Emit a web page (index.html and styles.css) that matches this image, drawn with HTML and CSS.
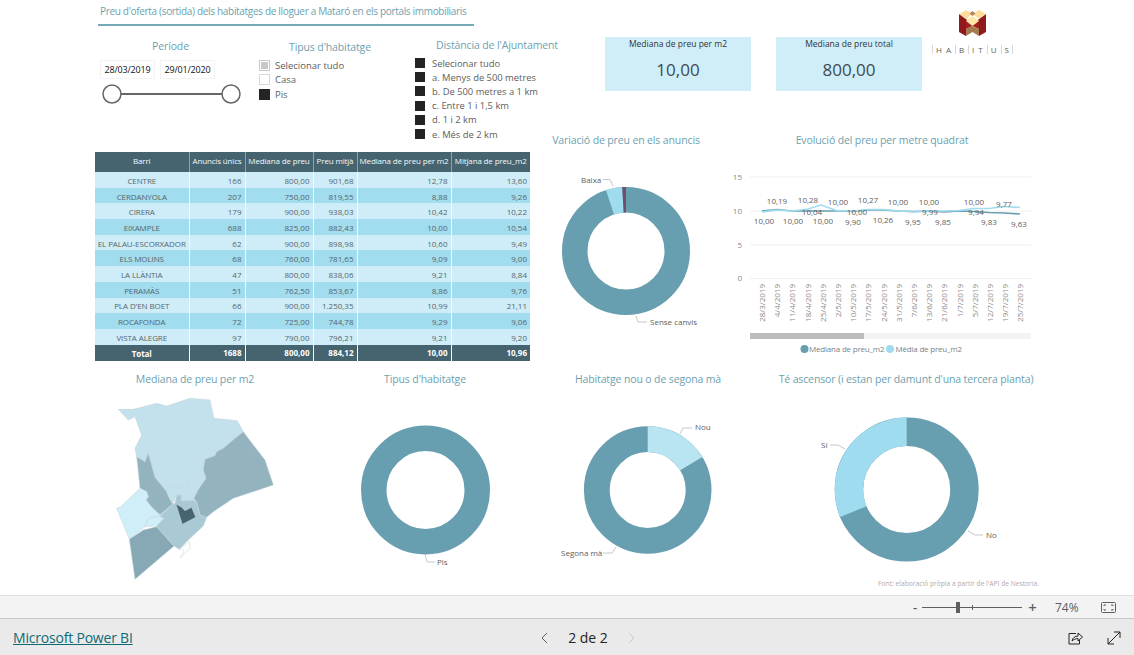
FILE: index.html
```
<!DOCTYPE html>
<html lang="ca">
<head>
<meta charset="utf-8">
<title>Microsoft Power BI</title>
<link rel="stylesheet" href="styles.css">
</head>
<body>
<div class="app">
  <main class="report">
    <div class="upper">
      <section class="left">
        <h1 class="report-title">Preu d'oferta (sortida) dels habitatges de lloguer a Mataró en els portals immobiliaris</h1>
        <div class="filters">
          <div class="period">
            <h2 class="vis-title">Període</h2>
            <div class="dates">
              <span class="date">28/03/2019</span>
              <span class="date">29/01/2020</span>
            </div>
            <svg class="slider" width="141" height="24" viewBox="100 82 141 24">
              <line x1="112" y1="94" x2="232" y2="94" class="slider-track"/>
              <circle cx="112" cy="94" r="9" class="slider-handle"/>
              <circle cx="231" cy="94" r="9" class="slider-handle"/>
            </svg>
          </div>
          <div class="types">
            <h2 class="vis-title">Tipus d'habitatge</h2>
            <ul class="check-list">
              <li class="check-item"><span class="box box-partial"></span>Selecionar tudo</li>
              <li class="check-item"><span class="box"></span>Casa</li>
              <li class="check-item"><span class="box box-on"></span>Pis</li>
            </ul>
          </div>
          <div class="distance">
            <h2 class="vis-title">Distància de l'Ajuntament</h2>
            <ul class="square-list">
              <li class="square-item"><span class="square"></span>Selecionar tudo</li>
              <li class="square-item"><span class="square"></span>a. Menys de 500 metres</li>
              <li class="square-item"><span class="square"></span>b. De 500 metres a 1 km</li>
              <li class="square-item"><span class="square"></span>c. Entre 1 i 1,5 km</li>
              <li class="square-item"><span class="square"></span>d. 1 i 2 km</li>
              <li class="square-item"><span class="square"></span>e. Més de 2 km</li>
            </ul>
          </div>
        </div>
        <table class="matrix">
          <colgroup>
            <col class="c1"><col class="c2"><col class="c3"><col class="c4"><col class="c5"><col class="c6">
          </colgroup>
          <thead>
            <tr><th>Barri</th><th>Anuncis únics</th><th>Mediana de preu</th><th>Preu mitjà</th><th>Mediana de preu per m2</th><th>Mitjana de preu_m2</th></tr>
          </thead>
          <tbody>
            <tr><td>CENTRE</td><td>166</td><td>800,00</td><td>901,68</td><td>12,78</td><td>13,60</td></tr>
            <tr><td>CERDANYOLA</td><td>207</td><td>750,00</td><td>819,55</td><td>8,88</td><td>9,26</td></tr>
            <tr><td>CIRERA</td><td>179</td><td>900,00</td><td>938,03</td><td>10,42</td><td>10,22</td></tr>
            <tr><td>EIXAMPLE</td><td>688</td><td>825,00</td><td>882,43</td><td>10,00</td><td>10,54</td></tr>
            <tr><td>EL PALAU-ESCORXADOR</td><td>62</td><td>900,00</td><td>898,98</td><td>10,60</td><td>9,49</td></tr>
            <tr><td>ELS MOLINS</td><td>68</td><td>760,00</td><td>781,65</td><td>9,09</td><td>9,00</td></tr>
            <tr><td>LA LLÀNTIA</td><td>47</td><td>800,00</td><td>838,06</td><td>9,21</td><td>8,84</td></tr>
            <tr><td>PERAMÀS</td><td>51</td><td>762,50</td><td>853,67</td><td>8,86</td><td>9,76</td></tr>
            <tr><td>PLA D'EN BOET</td><td>66</td><td>900,00</td><td>1.250,35</td><td>10,99</td><td>21,11</td></tr>
            <tr><td>ROCAFONDA</td><td>72</td><td>725,00</td><td>744,78</td><td>9,29</td><td>9,06</td></tr>
            <tr><td>VISTA ALEGRE</td><td>97</td><td>790,00</td><td>796,21</td><td>9,21</td><td>9,20</td></tr>
          </tbody>
          <tfoot>
            <tr><td>Total</td><td>1688</td><td>800,00</td><td>884,12</td><td>10,00</td><td>10,96</td></tr>
          </tfoot>
        </table>
      </section>

      <section class="right">
        <div class="top-row">
          <div class="kpi">
            <div class="kpi-label">Mediana de preu per m2</div>
            <div class="kpi-value">10,00</div>
          </div>
          <div class="kpi">
            <div class="kpi-label">Mediana de preu total</div>
            <div class="kpi-value">800,00</div>
          </div>
          <div class="logo">
            <svg width="28" height="28" viewBox="958 8 28 28">
              <polygon points="958,13 965,18 965,35 958,31" fill="#8f1a1e"/>
              <polygon points="985,13 978,18 978,35 985,31" fill="#8f1a1e"/>
              <polygon points="965,18 971.5,24 978,18 978,28 971.5,25 965,28" fill="#a3201f"/>
              <polygon points="965,28 971.5,25 978,28 978,35 971.5,31 965,35" fill="#a57c50"/>
              <polygon points="958.3,13 965,9 971.6,13 965,18" fill="#ffdc9a"/>
              <polygon points="971.6,13 978,9 985,13 978,18" fill="#ffdc9a"/>
              <polygon points="965,20 971.5,15 978,20 971.5,25" fill="#ffe7a8"/>
              <polygon points="968.5,12.5 971.5,10 974.5,12.5 971.5,15" fill="#b58a58"/>
            </svg>
            <div class="logo-text"><span class="logo-mark">H</span><span>A</span><span class="logo-mark">B</span><span class="logo-mark">I</span><span>T</span><span class="logo-mark">U</span><span class="logo-mark logo-end">S</span></div>
          </div>
        </div>
        <div class="chart-row">
          <figure class="donut-top">
            <figcaption class="vis-title">Variació de preu en els anuncis</figcaption>
            <svg width="162" height="212" viewBox="545 148 162 212">
              <circle cx="626" cy="251" r="51.25" class="ring-main" stroke-width="25.5"/>
              <path d="M622.2 187.1A64 64 0 0 0 606 190.2L614 214.4A38.5 38.5 0 0 1 623.7 212.6Z" class="slice-light"/>
              <path d="M626 187A64 64 0 0 0 622.2 187.1L623.7 212.6A38.5 38.5 0 0 1 626 212.5Z" class="slice-purple"/>
              <polyline points="603,179.5 610,179.5 613,186" class="leader"/>
              <polyline points="636,316 638,322 647,322" class="leader"/>
              <text x="581" y="183" class="label">Baixa</text>
              <text x="650" y="325" class="label">Sense canvis</text>
            </svg>
          </figure>
          <figure class="line-chart">
            <figcaption class="vis-title">Evolució del preu per metre quadrat</figcaption>
            <svg width="350" height="212" viewBox="707 148 350 212">
              <g class="grid">
                <line x1="750" y1="177" x2="1031" y2="177"/>
                <line x1="750" y1="211" x2="1031" y2="211"/>
                <line x1="750" y1="245" x2="1031" y2="245"/>
                <line x1="750" y1="278.5" x2="1031" y2="278.5"/>
              </g>
              <g class="axis-y">
                <text x="742" y="180">15</text>
                <text x="742" y="214">10</text>
                <text x="742" y="248">5</text>
                <text x="742" y="281">0</text>
              </g>
              <polyline class="line-dark" points="762,211 777,209.5 792,211 808,211 823,211 838,211 853,211.5 868,210 883,210 898,211 914,211.5 929,211 944,212 959,211 974,211.5 989,212.5 1004,213 1020,214"/>
              <polyline class="line-light" points="762,212 777,210 792,211 808,209 821,205 838,211 853,211 868,209.5 883,209.5 898,211 914,212 929,211 944,211 959,210.5 974,208.5 989,208.5 1004,206.5 1020,207.5"/>
              <g class="values">
                <text x="777" y="204">10,19</text>
                <text x="808" y="203">10,28</text>
                <text x="812" y="215">10,04</text>
                <text x="838" y="205">10,00</text>
                <text x="857" y="215">10,00</text>
                <text x="868" y="203">10,27</text>
                <text x="898" y="205">10,00</text>
                <text x="929" y="205">10,00</text>
                <text x="930" y="215">9,99</text>
                <text x="974" y="205">10,00</text>
                <text x="976" y="215">9,94</text>
                <text x="1004" y="207">9,77</text>
                <text x="764" y="224">10,00</text>
                <text x="793" y="224">10,00</text>
                <text x="823" y="224">10,00</text>
                <text x="853" y="225">9,90</text>
                <text x="883" y="223">10,26</text>
                <text x="913" y="225">9,95</text>
                <text x="943" y="225">9,85</text>
                <text x="989" y="225">9,83</text>
                <text x="1019" y="227">9,63</text>
              </g>
              <g class="axis-x">
                <text transform="translate(765 284) rotate(-90)">28/3/2019</text>
                <text transform="translate(780 284) rotate(-90)">4/4/2019</text>
                <text transform="translate(795 284) rotate(-90)">11/4/2019</text>
                <text transform="translate(810.5 284) rotate(-90)">18/4/2019</text>
                <text transform="translate(825.5 284) rotate(-90)">25/4/2019</text>
                <text transform="translate(841 284) rotate(-90)">2/5/2019</text>
                <text transform="translate(856 284) rotate(-90)">10/5/2019</text>
                <text transform="translate(871 284) rotate(-90)">17/5/2019</text>
                <text transform="translate(886.5 284) rotate(-90)">24/5/2019</text>
                <text transform="translate(901.5 284) rotate(-90)">31/5/2019</text>
                <text transform="translate(917 284) rotate(-90)">7/6/2019</text>
                <text transform="translate(932 284) rotate(-90)">13/6/2019</text>
                <text transform="translate(947 284) rotate(-90)">21/6/2019</text>
                <text transform="translate(962.5 284) rotate(-90)">1/7/2019</text>
                <text transform="translate(977.5 284) rotate(-90)">5/7/2019</text>
                <text transform="translate(993 284) rotate(-90)">12/7/2019</text>
                <text transform="translate(1008 284) rotate(-90)">19/7/2019</text>
                <text transform="translate(1023 284) rotate(-90)">25/7/2019</text>
              </g>
              <rect x="750" y="333" width="281" height="6" fill="#f3f3f3"/>
              <rect x="750" y="333" width="114" height="6" fill="#bdbdbd"/>
              <circle cx="804.5" cy="349" r="4" fill="#689fb0"/>
              <text x="809" y="352" class="legend">Mediana de preu_m2</text>
              <circle cx="890" cy="349" r="4" fill="#a0dcef"/>
              <text x="895.5" y="352" class="legend">Mèdia de preu_m2</text>
            </svg>
          </figure>
        </div>
      </section>
    </div>

    <div class="lower">
      <figure class="col-map">
        <figcaption class="vis-title">Mediana de preu per m2</figcaption>
        <svg class="map" width="190" height="195" viewBox="0 0 570 585">
          <g class="districts">
            <polygon fill="#c3e1ec" points="55,58 100,58 170,40 200,48 270,25 330,30 342,85 412,92 430,125 405,145 370,175 350,185 345,197 315,208 310,240 318,265 292,303 265,275 262,290 205,292 200,305 165,262 145,190 135,215 110,200 105,175 125,135 112,100 105,80 85,90"/>
            <polygon fill="#93b3bf" points="430,125 460,165 495,210 520,285 400,325 340,365 320,382 300,375 290,335 280,325 292,303 318,265 310,240 315,208 345,197 350,185 370,175 405,145"/>
            <polygon fill="#93b3bf" points="110,200 135,215 145,190 165,262 200,305 205,318 218,342 180,375 158,355 138,330 145,320 140,305 120,295"/>
            <polygon fill="#d0eef8" points="120,295 62,350 50,355 88,448 135,410 145,385 175,378 180,375 158,355 138,330 145,320 140,305"/>
            <polygon fill="#86a9b5" points="88,448 130,420 170,410 222,468 105,568"/>
            <polygon fill="#a9cad5" points="218,342 180,378 170,410 222,468 238,478 268,447 310,408 320,382 300,375 290,335 280,330 245,332 245,315 230,315 225,340"/>
            <polygon fill="#c3e1ec" points="205,292 262,290 265,275 292,303 280,330 245,332 245,315 230,315 218,342 205,318 200,305"/>
            <polygon fill="#d0eef8" points="175,378 145,385 135,410 170,408 192,385"/>
            <polygon fill="#46646f" points="228,342 245,352 255,362 275,352 287,382 247,403"/>
            <polygon fill="#ffffff" points="238,478 268,455 270,475 240,505 252,483 245,476"/>
          </g>
        </svg>
      </figure>
      <figure class="col-type">
        <figcaption class="vis-title">Tipus d'habitatge</figcaption>
        <svg width="260" height="204" viewBox="295 388 260 204">
          <circle cx="425.5" cy="490" r="51.75" class="ring-main" stroke-width="25.5"/>
          <polyline points="425,554 427,562 435,562" class="leader"/>
          <text x="437" y="565" class="label">Pis</text>
        </svg>
      </figure>
      <figure class="col-new">
        <figcaption class="vis-title">Habitatge nou o de segona mà</figcaption>
        <svg width="186" height="204" viewBox="555 388 186 204">
          <circle cx="647.7" cy="490" r="50.9" class="ring-main" stroke-width="25.8"/>
          <path d="M647.7 426.2A63.8 63.8 0 0 1 702.3 457L680.2 470.3A38 38 0 0 0 647.7 452Z" class="slice-pale"/>
          <polyline points="680,434 683,428 692,428" class="leader"/>
          <polyline points="603,553 612,553 616,547" class="leader"/>
          <text x="695" y="430" class="label">Nou</text>
          <text x="561" y="556" class="label">Segona mà</text>
        </svg>
      </figure>
      <figure class="col-lift">
        <figcaption class="vis-title">Té ascensor (i estan per damunt d'una tercera planta)</figcaption>
        <svg width="330" height="204" viewBox="741 388 330 204">
          <circle cx="906.7" cy="489.5" r="57.75" class="ring-main" stroke-width="28.5"/>
          <path d="M906.7 417.5A72 72 0 0 0 840.2 517.1L866.5 506.2A43.5 43.5 0 0 1 906.7 446Z" class="slice-light"/>
          <polyline points="830,445 838,445 845,449" class="leader"/>
          <polyline points="968,531 975,535 983,535" class="leader"/>
          <text x="821" y="448" class="label">Sí</text>
          <text x="986" y="538" class="label">No</text>
          <text x="1039" y="586" class="source">Font: elaboració pròpia a partir de l'API de Nestoria.</text>
        </svg>
      </figure>
    </div>
  </main>

  <div class="zoombar">
    <span class="zoom-sign">-</span>
    <div class="zoom-slider"><span class="zoom-tick"></span><span class="zoom-thumb"></span></div>
    <span class="zoom-sign zoom-plus">+</span>
    <span class="zoom-value">74%</span>
    <svg class="fit-icon" width="15" height="11" viewBox="0 0 15 11">
      <rect x="0.5" y="0.5" width="14" height="10" rx="1" class="icon-line-thin"/>
      <path d="M3 4V3H5M10 3H12V4M12 7V8H10M5 8H3V7" class="icon-line-thin"/>
    </svg>
  </div>

  <footer class="footer">
    <a class="brand" href="#">Microsoft Power BI</a>
    <nav class="pager">
      <svg width="8" height="12" viewBox="0 0 8 12"><path d="M7 1L2 6L7 11" class="chev"/></svg>
      <span class="page-num">2 de 2</span>
      <svg width="8" height="12" viewBox="0 0 8 12"><path d="M1 1L6 6L1 11" class="chev chev-off"/></svg>
    </nav>
    <div class="foot-icons">
      <svg width="15" height="14" viewBox="0 0 15 14">
        <path d="M8 2.5H1V13H11.5V9" class="icon-line"/>
        <path d="M4 10C4.5 7 7 5 10 5V2L14.5 6L10 10V7.5C8 7.5 5.5 8.5 4 10Z" class="icon-line"/>
      </svg>
      <svg width="14" height="14" viewBox="0 0 14 14">
        <path d="M1 13L13 1M7 1H13V7M1 7V13H7" class="icon-line"/>
      </svg>
    </div>
  </footer>
</div>
</body>
</html>
```

FILE: styles.css
```
* { box-sizing: border-box; }

html, body {
  margin: 0;
  padding: 0;
  background: #fff;
}

body {
  font-family: "Open Sans", "Noto Sans", "Liberation Sans", sans-serif;
  color: #605e5c;
}

figure, h1, h2, ul { margin: 0; padding: 0; }
ul { list-style: none; }

.app {
  width: 1134px;
  height: 655px;
  display: flex;
  flex-direction: column;
  overflow: hidden;
}

.report {
  height: 595px;
  display: flex;
  flex-direction: column;
}

.upper {
  height: 370px;
  display: flex;
  padding-left: 95px;
}

.left {
  width: 450px;
  flex: none;
}

.report-title {
  margin-left: 3px;
  width: 376px;
  height: 26px;
  padding: 2px 0 0 2px;
  border-bottom: 2px solid #74a9b8;
  font-size: 10px;
  line-height: 18px;
  font-weight: 400;
  color: #6d9fb0;
  letter-spacing: -0.32px;
  white-space: nowrap;
}

.vis-title {
  font-size: 10.5px;
  line-height: 16px;
  font-weight: 400;
  color: #6d9fb0;
  letter-spacing: -0.13px;
  text-align: center;
  white-space: nowrap;
}

.filters {
  height: 126px;
  display: flex;
  align-items: flex-start;
}

.period {
  width: 141px;
  margin: 12px 0 0 5px;
  flex: none;
}

.dates {
  display: flex;
  gap: 5px;
  margin-top: 6px;
}

.date {
  width: 55px;
  height: 19px;
  border: 1px solid #f3f3f3;
  font-size: 9px;
  line-height: 17px;
  text-align: center;
  color: #111;
  letter-spacing: -0.2px;
}

.slider { display: block; margin-top: 3px; }
.slider-track { stroke: #666; stroke-width: 2; }
.slider-handle { fill: #fff; stroke: #666; stroke-width: 1.5; }

.types {
  width: 144px;
  margin: 13px 0 0 17px;
  flex: none;
}

.check-list {
  margin-top: 3px;
  padding-left: 1px;
}

.check-item {
  height: 14.5px;
  display: flex;
  align-items: center;
  gap: 5px;
  font-size: 9.5px;
  white-space: nowrap;
}

.box {
  width: 11px;
  height: 11px;
  flex: none;
  border: 1px solid #d8d8d8;
  background: #fff;
}

.box-partial {
  background: #c8c8c8;
  border: 1px solid #c8c8c8;
  box-shadow: inset 0 0 0 1px #fff;
}

.box-on {
  background: #252423;
  border-color: #252423;
}

.distance {
  width: 164px;
  margin: 11px 0 0 13px;
  flex: none;
}

.square-list { margin-top: 3px; }

.square-item {
  height: 14.2px;
  display: flex;
  align-items: center;
  gap: 7px;
  font-size: 9.4px;
  white-space: nowrap;
}

.square {
  width: 10px;
  height: 10px;
  flex: none;
  background: #252423;
}

.matrix {
  width: 435px;
  table-layout: fixed;
  border-collapse: collapse;
  font-size: 8px;
}

.c1 { width: 94px; }
.c2 { width: 56px; }
.c3 { width: 68px; }
.c4 { width: 44px; }
.c5 { width: 94px; }
.c6 { width: 79px; }

.matrix th {
  height: 20px;
  padding: 0 2px 3px;
  background: #46646f;
  color: #f2f9fb;
  font-weight: 400;
  text-align: center;
  white-space: nowrap;
  border-right: 1px solid #8aa2ab;
  letter-spacing: -0.15px;
}

.matrix th:last-child { border-right: 0; }

.matrix td {
  height: 15.7px;
  padding: 1px 3px 0;
  text-align: right;
  white-space: nowrap;
  color: #56666c;
  border-right: 1px solid #f0fafd;
}

.matrix td:last-child { border-right: 0; }
.matrix td:first-child { text-align: center; padding: 1px 0 0; letter-spacing: -0.1px; }

.matrix tbody tr:nth-child(odd) td { background: #cfedf8; }
.matrix tbody tr:nth-child(even) td { background: #a1dcef; }

.matrix tfoot td {
  background: #46646f;
  color: #fff;
  font-weight: 700;
  height: 16px;
  padding-top: 0;
}

.right {
  flex: 1;
  min-width: 0;
}

.top-row {
  height: 132px;
  display: flex;
  align-items: flex-start;
  padding: 37px 0 0 60px;
  gap: 25px;
}

.kpi {
  width: 146px;
  height: 54px;
  flex: none;
  background: #d0eef8;
  text-align: center;
  color: #333;
}

.kpi-label {
  font-size: 8.5px;
  line-height: 14px;
}

.kpi-value {
  margin-top: 5px;
  font-size: 17px;
  line-height: 28px;
  color: #3e4a50;
}

.logo {
  margin: -28px 0 0 -15px;
  width: 81px;
  display: flex;
  flex-direction: column;
  align-items: center;
}

.logo svg { display: block; }

.logo-text {
  width: 81px;
  margin-top: 8px;
  display: flex;
  justify-content: space-between;
  font-size: 8px;
  line-height: 9px;
  color: #605e5c;
}

.logo-mark {
  border-left: 1px solid #d8d8d8;
  padding-left: 3px;
}

.logo-end {
  border-right: 1px solid #d8d8d8;
  padding-right: 3px;
}

.chart-row {
  height: 238px;
  display: flex;
}

.donut-top { width: 162px; flex: none; }
.line-chart { width: 350px; flex: none; }

.donut-top svg, .line-chart svg, .lower svg { display: block; }

.ring-main { fill: none; stroke: #689fb0; }
.slice-light { fill: #a0dcef; }
.slice-pale { fill: #b9e5f3; }
.slice-purple { fill: #744d6e; }
.leader { fill: none; stroke: #c8c8c8; stroke-width: 1; }

.label {
  font-size: 8px;
  fill: #605e5c;
}

.grid line { stroke: #f0f0f0; stroke-width: 1; }

.axis-y text {
  font-size: 8px;
  fill: #8a8886;
  text-anchor: end;
}

.axis-x text {
  font-size: 8px;
  fill: #8a8886;
  text-anchor: end;
}

.values text {
  font-size: 8px;
  fill: #605e5c;
  text-anchor: middle;
}

.line-dark { fill: none; stroke: #689fb0; stroke-width: 1.5; }
.line-light { fill: none; stroke: #a0dcef; stroke-width: 1.5; }

.legend {
  font-size: 8px;
  fill: #7a8488;
  letter-spacing: -0.2px;
}

.source {
  font-size: 6.7px;
  fill: #b3aaaa;
  text-anchor: end;
}

.lower {
  flex: 1;
  display: flex;
  padding-left: 95px;
}

.col-map { width: 200px; flex: none; }
.col-type { width: 260px; flex: none; }
.col-new { width: 186px; flex: none; }
.col-lift { width: 330px; flex: none; }

.lower .vis-title {
  line-height: 18px;
}

.map {
  margin: 2px auto 0;
}

.districts polygon {
  stroke: #c5d3d8;
  stroke-width: 1.5;
  stroke-linejoin: round;
}

.zoombar {
  height: 24px;
  flex: none;
  display: flex;
  align-items: center;
  padding-left: 912px;
  background: #f3f3f3;
  border-top: 1px solid #e1e1e1;
  border-bottom: 1px solid #c8c8c8;
  font-size: 12px;
  color: #605e5c;
}

.zoom-sign {
  width: 6px;
  text-align: center;
  font-size: 13px;
  font-weight: 600;
  line-height: 14px;
}

.zoom-plus {
  width: 9px;
  margin-left: 3px;
  font-size: 15px;
}

.zoom-slider {
  position: relative;
  width: 100px;
  height: 1px;
  margin: 0 3px 0 4px;
  background: #605e5c;
}

.zoom-tick {
  position: absolute;
  left: 50px;
  top: -2px;
  width: 1px;
  height: 5px;
  background: #605e5c;
}

.zoom-thumb {
  position: absolute;
  left: 34px;
  top: -5px;
  width: 4px;
  height: 11px;
  background: #605e5c;
}

.zoom-value {
  margin-left: 18px;
  width: 25px;
  text-align: left;
}

.fit-icon {
  margin-left: 21px;
}

.icon-line-thin { fill: none; stroke: #605e5c; stroke-width: 1; }

.footer {
  flex: 1;
  display: flex;
  align-items: center;
  position: relative;
  padding: 1px 13px 0;
  background: #eaeaea;
}

.brand {
  font-size: 14px;
  color: #0f6a74;
  letter-spacing: -0.2px;
}

.pager {
  position: absolute;
  left: 540px;
  top: 12px;
  width: 96px;
  display: flex;
  align-items: center;
  justify-content: space-between;
}

.page-num {
  font-size: 14px;
  line-height: 14px;
  color: #252423;
  font-weight: 500;
}

.chev { fill: none; stroke: #605e5c; stroke-width: 1; }
.chev-off { stroke: #c8c8c8; }

.foot-icons {
  margin-left: auto;
  display: flex;
  align-items: center;
  gap: 24px;
}

.foot-icons svg { display: block; }

.icon-line { fill: none; stroke: #252423; stroke-width: 1; }
```
